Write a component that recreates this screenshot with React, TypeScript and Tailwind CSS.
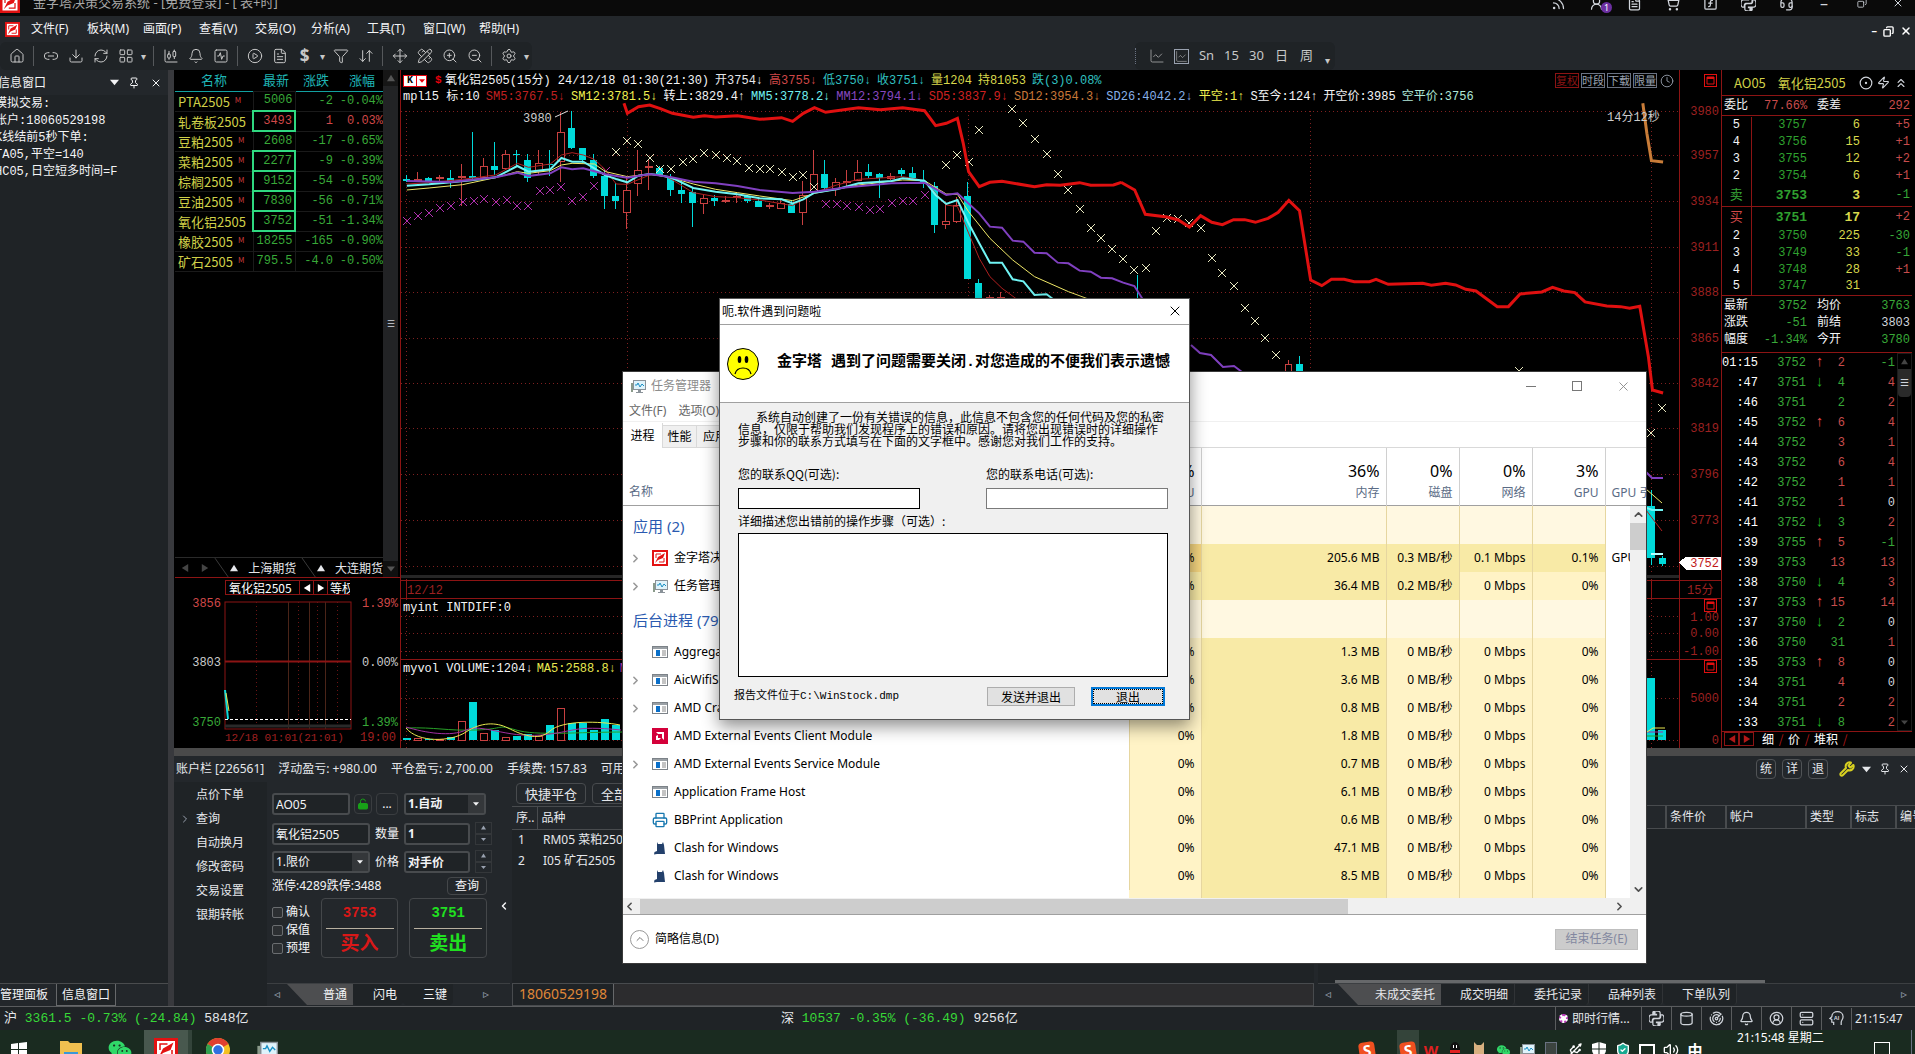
import React from 'react';
import {
  Bell, CandlestickChart, ChartLine, ChevronDown, ChevronLeft, ChevronRight, ChevronUp, ChevronsUp, CirclePlay, Clock, CircleDot,
  CircleUserRound, Copy, Cylinder, Download, FileText, Headset, Home, LayoutGrid, Link2, LockOpen, Move, PencilRuler, Pin, Printer,
  Radar, RefreshCw, Rss, Server, Settings, ShoppingCart, SquareActivity, SquareFunction, UserRound, Volume2, Wrench, X, Zap,
  ZoomIn, ZoomOut, Filter, ArrowDownUp, Usb, ShieldCheck,
} from 'lucide-react';
import { SiPython } from 'react-icons/si';
import { AiFillWechat } from 'react-icons/ai';

const MONO = "font-['Liberation_Mono','Noto_Sans_CJK_SC',monospace]";
const UI = "font-['Noto_Sans','Noto_Sans_CJK_SC',sans-serif]";

const menus = ['文件(F)', '板块(M)', '画面(P)', '查看(V)', '交易(O)', '分析(A)', '工具(T)', '窗口(W)', '帮助(H)'];

interface Quote {
  name: string;
  mark?: boolean;
  last: string;
  diff: string;
  pct: string;
  up?: boolean;
  boxed?: boolean;
}

const quotes: Quote[] = [
  { name: 'PTA2505', mark: true, last: '5006', diff: '-2', pct: '-0.04%' },
  { name: '轧卷板2505', last: '3493', diff: '1', pct: '0.03%', up: true, boxed: true },
  { name: '豆粕2505', mark: true, last: '2608', diff: '-17', pct: '-0.65%' },
  { name: '菜粕2505', mark: true, last: '2277', diff: '-9', pct: '-0.39%', boxed: true },
  { name: '棕榈2505', mark: true, last: '9152', diff: '-54', pct: '-0.59%', boxed: true },
  { name: '豆油2505', mark: true, last: '7830', diff: '-56', pct: '-0.71%', boxed: true },
  { name: '氧化铝2505', last: '3752', diff: '-51', pct: '-1.34%', boxed: true },
  { name: '橡胶2505', mark: true, last: '18255', diff: '-165', pct: '-0.90%' },
  { name: '矿石2505', mark: true, last: '795.5', diff: '-4.0', pct: '-0.50%' },
];

// [low wick, high wick, body top, body bottom, up?]
const candles: [number, number, number, number, number][] = [
  [345, 366, 358, 362, 0], [336, 366, 358, 361, 1], [350, 366, 354, 363, 0], [345, 362, 353, 356, 1],
  [330, 383, 354, 366, 0], [312, 437, 349, 352, 1], [215, 356, 348, 354, 0], [294, 355, 318, 352, 1],
  [245, 345, 318, 329, 0], [270, 330, 283, 325, 1], [270, 320, 283, 286, 0], [282, 365, 300, 353, 0],
  [270, 345, 310, 335, 1], [270, 348, 312, 315, 0], [155, 365, 217, 303, 1], [153, 268, 205, 263, 0],
  [264, 310, 264, 300, 0], [282, 353, 300, 347, 0], [330, 447, 347, 408, 0], [370, 447, 408, 422, 0],
  [350, 507, 392, 458, 1], [270, 408, 331, 371, 1], [298, 390, 318, 323, 1], [318, 347, 324, 345, 0],
  [343, 408, 350, 390, 0], [360, 428, 390, 401, 0], [380, 500, 397, 430, 0], [403, 463, 415, 430, 1],
  [404, 438, 414, 423, 0], [408, 428, 422, 425, 1], [400, 428, 410, 413, 1], [405, 430, 408, 422, 0],
  [415, 442, 422, 440, 0], [428, 446, 435, 438, 1], [420, 448, 430, 445, 1], [420, 458, 432, 458, 0],
  [362, 494, 405, 457, 1], [270, 402, 342, 398, 1], [301, 390, 342, 384, 0], [355, 408, 368, 384, 1],
  [330, 380, 363, 366, 1], [301, 362, 336, 360, 1], [312, 353, 336, 347, 0], [340, 413, 343, 355, 0],
  [340, 360, 348, 356, 1], [323, 350, 330, 343, 0], [322, 360, 340, 354, 0], [330, 384, 362, 366, 0],
  [366, 518, 378, 494, 0], [432, 507, 483, 494, 1], [410, 490, 436, 483, 1], [366, 657, 408, 657, 0],
  [657, 720, 670, 720, 0], [706, 730, 712, 730, 1], [697, 730, 712, 730, 1],
];

const whiteMarks: [number, number][] = [
  [215, 82], [226, 71], [237, 74], [249, 88], [259, 99], [270, 99], [282, 92], [292, 89], [303, 83], [315, 85],
  [326, 88], [336, 91], [348, 98], [359, 99], [369, 99], [381, 102], [392, 107], [402, 105], [413, 117],
  [545, 95], [556, 85], [568, 92], [578, 60], [611, 39], [622, 53], [634, 69], [646, 84], [657, 104], [667, 120],
  [679, 139], [690, 158], [700, 168], [711, 179], [722, 189], [733, 200], [745, 198], [755, 161], [766, 148],
  [777, 149], [788, 153], [800, 158], [811, 188], [821, 203], [833, 216], [844, 238], [854, 251], [864, 268],
  [875, 285], [1118, 301], [1261, 338], [1250, 363],
];

const pinkMarks: [number, number][] = [
  [6, 151], [17, 146], [28, 143], [39, 138], [50, 136], [62, 132], [73, 131], [83, 129], [95, 132], [106, 130],
  [116, 136], [127, 136], [139, 121], [149, 120], [160, 117], [171, 131], [182, 127], [193, 116], [205, 101],
  [425, 134], [436, 134], [446, 136], [458, 137], [469, 140], [479, 139], [491, 133], [502, 131], [512, 131], [524, 125],
];

const volumes: [number, number][] = [
  [2, 0], [2, 1], [1, 0], [1, 1], [3, 0], [19, 1], [38, 0], [7, 1], [10, 0], [3, 1], [4, 0], [6, 0], [4, 1],
  [15, 0], [32, 1], [17, 0], [17, 0], [10, 0], [21, 0], [15, 0], [24, 1],
];

const asks = [
  ['5', '3757', '6', '+5'], ['4', '3756', '15', '+1'], ['3', '3755', '12', '+2'], ['2', '3754', '6', '+1'],
];
const bids = [
  ['2', '3750', '225', '-30'], ['3', '3749', '33', '-1'], ['4', '3748', '28', '+1'], ['5', '3747', '31', ''],
];

// time, price, direction, volume, side, open interest change
const ticks: [string, string, string, string, string, string][] = [
  ['01:15', '3752', '↑', '2', 'r', '-1'], [':47', '3751', '↓', '4', 'g', '4'], [':46', '3751', '', '2', 'g', '2'],
  [':45', '3752', '↑', '6', 'r', '4'], [':44', '3752', '', '3', 'r', '1'], [':43', '3752', '', '6', 'r', '4'],
  [':42', '3752', '', '1', 'r', '1'], [':41', '3752', '', '1', 'r', '0'], [':41', '3752', '↓', '3', 'g', '2'],
  [':39', '3755', '↑', '5', 'r', '-1'], [':39', '3753', '', '13', 'r', '13'], [':38', '3750', '↓', '4', 'g', '3'],
  [':37', '3753', '↑', '15', 'r', '14'], [':37', '3750', '↓', '2', 'g', '0'], [':36', '3750', '', '31', 'g', '1'],
  [':35', '3753', '↑', '8', 'r', '0'], [':34', '3751', '', '4', 'r', '0'], [':34', '3751', '', '2', 'r', '2'],
  [':33', '3751', '↓', '8', 'g', '2'],
];

const processes = [
  { name: 'Aggregator Host', icon: 'app', mem: '1.3 MB' },
  { name: 'AicWifiService', icon: 'app', mem: '3.6 MB', open: true },
  { name: 'AMD Crash Defender Service', icon: 'app', mem: '0.8 MB', open: true },
  { name: 'AMD External Events Client Module', icon: 'amd', mem: '1.8 MB' },
  { name: 'AMD External Events Service Module', icon: 'app', mem: '0.7 MB', open: true },
  { name: 'Application Frame Host', icon: 'app', mem: '6.1 MB' },
  { name: 'BBPrint Application', icon: 'print', mem: '0.6 MB' },
  { name: 'Clash for Windows', icon: 'cat', mem: '47.1 MB' },
  { name: 'Clash for Windows', icon: 'cat', mem: '8.5 MB' },
];

const AppLogo = ({ className }: { className: string }) => (
  <svg viewBox="0 0 16 16" className={className}>
    <rect width="16" height="16" fill="#e31212" />
    <rect x="2" y="2" width="12" height="12" fill="#fff" />
    <path d="M4 8V4h5M7 12h5V8" fill="none" stroke="#e31212" />
    <path d="M3 13l3-6 7-4-2 5-5 2z" fill="#e31212" />
  </svg>
);

const MonitorIcon = ({ className }: { className: string }) => (
  <svg viewBox="0 0 16 16" className={className}>
    <path d="M1 5v9h2V5z" fill="#8b9b8b" />
    <rect x="3.500" y="2.500" width="12" height="9" fill="#dff3fb" stroke="#8a9299" />
    <path d="M5 7h2l1-2 2 4 2-3 2 2" fill="none" stroke="#1a8fc4" />
    <path d="M8 12h3v2h2v1H6v-1h2z" fill="#8a9299" />
  </svg>
);

const PythonIcon = ({ className }: { className?: string }) => (
  <SiPython className={`[&_path]:fill-none [&_path]:stroke-current [&_path]:stroke-2 ${className}`} />
);

const AiHead = ({ className }: { className?: string }) => (
  <svg viewBox="0 0 16 16" className={className} fill="none" stroke="currentColor">
    <path d="M5 15v-3H3V9L1 8l2-2c0-7 12-7 12 0 0 3-2 4-2 6v3" strokeWidth="1.300" />
    <text x="5" y="10" fontSize="6" fontWeight="bold" fill="currentColor" stroke="none" className="font-['Liberation_Sans',sans-serif]">AI</text>
  </svg>
);

const Tri = ({ dir, className }: { dir: 'up' | 'down' | 'left' | 'right'; className: string }) => {
  const shapes = { up: 'M0 9L5 1l5 8z', down: 'M0 2h10L5 8z', left: 'M9 0v10L1 5z', right: 'M1 0v10l8-5z' };
  return <svg viewBox="0 0 10 10" className={`shrink-0 ${className}`} fill="currentColor"><path d={shapes[dir]} /></svg>;
};

const ProcIcon = ({ kind }: { kind: string }) => {
  if (kind === 'amd') {
    return (
      <svg viewBox="0 0 16 16" className="size-4 shrink-0">
        <rect width="16" height="16" fill="#d4003a" />
        <path d="M4 4h8v8l-2-2V6H6zM4 8l2-1v3h3l-2 2H4z" fill="#fff" />
      </svg>
    );
  }
  if (kind === 'print') return <Printer className="size-4 shrink-0 text-[#1878b0]" />;
  if (kind === 'cat') {
    return (
      <svg viewBox="0 0 16 16" className="size-4 shrink-0">
        <path d="M5 2l1 2h4l1-2 1 3 1 9H5l-3 .5.5-2.500L5 11z" fill="#23406b" />
      </svg>
    );
  }
  return (
    <svg viewBox="0 0 16 16" className="size-4 shrink-0">
      <rect x=".5" y="2.500" width="15" height="11" fill="#fff" stroke="#7c8288" />
      <path d="M1 3h14v2H1z" fill="#9aa0a5" />
      <path d="M4 6h4v6H4z" fill="#0a6fc9" />
      <path d="M10 7h4M10 9h4M10 11h4" stroke="#888" />
    </svg>
  );
};

const WinBadge = ({ className = '' }: { className?: string }) => (
  <svg viewBox="0 0 13 13" className={`size-[13px] ${className}`}>
    <rect x=".5" y=".5" width="12" height="12" fill="none" stroke="#e01010" />
    <path d="M3 3h7v7H3z" fill="none" stroke="#e01010" />
    <path d="M3 4h7" stroke="#e01010" strokeWidth="2" />
  </svg>
);

const TopBars: React.FC = () => (
  <header className={UI}>
    <div className="flex h-4 items-end overflow-hidden bg-[#0a0a0a] text-[#a8a8a8]">
      <div className="flex h-[26px] flex-1 items-center text-[13px]">
        <AppLogo className="mr-[13px] size-5" />
        <span>金字塔决策交易系统 - [免费登录] - [ 表+时]</span>
      </div>
      <div className="flex h-[26px] items-center text-gray-300">
        {[Rss, UserRound, FileText, ShoppingCart, SquareFunction, PythonIcon, Headset].map((Icon, i) => (
          <span key={i} className="relative flex w-[38px] justify-center">
            <Icon className="size-[15px]" />
            {i === 1 && (
              <span className="absolute top-[6px] right-[3px] size-[11px] rounded-full bg-[#6b2fa0] text-center text-[9px] leading-[11px] text-white">1</span>
            )}
          </span>
        ))}
        <span className="w-[38px] text-center">–</span>
        <span className="flex w-[38px] justify-center"><Copy className="size-[10px] rotate-90" /></span>
        <span className="flex w-[34px] justify-center"><X className="size-3" /></span>
      </div>
    </div>
    <div className="flex h-[26px] items-center bg-[#23272b] pr-[3px] pl-[5px] text-[12px] text-gray-100">
      <AppLogo className="mr-[11px] size-[15px]" />
      <nav className="flex flex-1 gap-4">
        {menus.map((m) => (
          <a key={m} href="#" className="w-10 whitespace-nowrap">{m}</a>
        ))}
      </nav>
      <div className="flex items-center gap-[6px] pt-1 text-[11px] font-bold text-white">
        <span>–</span><Copy className="size-[11px] rotate-90" strokeWidth={3} /><X className="size-3" strokeWidth={3} />
      </div>
    </div>
    <div className="flex h-7 justify-between bg-[#23272b] text-[#c8c8c8]">
      <div className="flex items-center rounded-md bg-[#1f2326] pl-1">
        {[Home, null, Link2, Download, RefreshCw, LayoutGrid, '▾', null, CandlestickChart, Bell, SquareActivity, null, CirclePlay, FileText, '$', '▾',
          Filter, ArrowDownUp, null, Move, PencilRuler, ZoomIn, ZoomOut, null, Settings, '▾'].map((Icon, i) => {
          if (Icon === null) return <span key={i} className="mx-1 h-5 w-px bg-[#55585b]" />;
          if (typeof Icon === 'string') {
            return (
              <button key={i} className={Icon === '$' ? 'w-[25px] text-[17px] font-bold' : 'w-[11px] text-[10px]'}>{Icon}</button>
            );
          }
          return (
            <button key={i} className="flex w-[25px] justify-center"><Icon className="size-4" strokeWidth={1.5} /></button>
          );
        })}
      </div>
      <div className="mr-[580px] flex items-center rounded-md bg-[#1f2326] text-[13px]">
        <span className="h-4 border-l border-dotted border-gray-500 pr-2" />
        <button className="flex w-[25px] justify-center"><ChartLine className="size-4" strokeWidth={1} /></button>
        <button className="flex w-[25px] justify-center"><span className="border border-gray-400"><ChartLine className="size-[13px]" strokeWidth={1} /></span></button>
        {['Sn', '15', '30', '日', '周'].map((t) => <button key={t} className="w-[25px]">{t}</button>)}
        <button className="w-4 pt-2 text-[10px]">▾</button>
      </div>
    </div>
  </header>
);

const InfoPanel: React.FC = () => (
  <aside className="flex w-[168px] shrink-0 flex-col bg-[#1f2326] text-gray-100">
    <div className={`flex h-[25px] items-center bg-[#23272b] text-[12px] ${UI}`}>
      <span className="-ml-[2px] flex-1">信息窗口</span>
      <Tri dir="down" className="mr-[9px] size-[9px]" />
      <Pin className="mr-[10px] size-3" />
      <X className="mr-[6px] size-3" />
    </div>
    <div className={`-ml-[5px] flex-1 pt-px text-[12px] leading-[17px] whitespace-nowrap ${MONO}`}>
      <p>模拟交易:</p>
      <p>账户:18060529198</p>
      <p>K线结前5秒下单:</p>
      <p>TA05,平空=140</p>
      <p>HC05,日空短多时间=F</p>
    </div>
    <div className={`flex h-[23px] border-t border-[#4a4c4e] bg-[#23272b] text-[12px] ${UI}`}>
      <button className="w-14 text-left">管理面板</button>
      <button className="w-[60px] border border-t-0 border-[#66686a] bg-[#1f2326]">信息窗口</button>
    </div>
  </aside>
);

const QuotePanel: React.FC = () => (
  <section className="flex w-[226px] shrink-0 flex-col bg-black pl-px">
    <div className="flex h-[508px] border-b border-[#8c1414]">
      <div className="flex w-[208px] flex-col">
        <table className="w-full table-fixed border-collapse text-[12px]">
          <thead>
            <tr className="h-[21px] border-b border-[#12a0a0] text-[13px] leading-5 text-[#1fb5b5]">
              <th className="w-[78px] p-0 font-normal">名称</th>
              <th className="w-[42px] p-0 pr-[6px] text-right font-normal whitespace-nowrap">最新</th>
              <th className="w-[42px] p-0 font-normal">涨跌</th>
              <th className="p-0 pr-2 text-right font-normal">涨幅</th>
            </tr>
          </thead>
          <tbody>
            {quotes.map((q) => (
              <tr key={q.name} className={`h-5 border-b border-[#1a1a1a] text-right leading-[17px] ${MONO} ${q.up ? 'text-[#d04848]' : 'text-[#38a838]'}`}>
                <td className="p-0 pl-[3px] text-left font-['Noto_Sans_CJK_SC',sans-serif] text-[13px] whitespace-nowrap text-[#cfcf48]">
                  {q.name}
                  {q.mark && <sup className="ml-[5px] text-[8px] text-[#c83838]">M</sup>}
                </td>
                <td className={q.boxed ? 'border-2 border-[#2fd880] p-0 pr-[2px]' : 'border border-[#1a1a1a] p-0 pr-[2px]'}>{q.last}</td>
                <td className="p-0 pr-1">{q.diff}</td>
                <td className="p-0">{q.pct}</td>
              </tr>
            ))}
          </tbody>
        </table>
        <div className="mt-auto flex h-5 items-center overflow-hidden border-t border-[#2a2a2a] text-[12px] whitespace-nowrap text-gray-200">
          <button className="flex w-5 justify-center text-[#444]"><Tri dir="left" className="size-2" /></button>
          <button className="flex w-5 justify-center text-[#444]"><Tri dir="right" className="size-2" /></button>
          <svg className="h-5 w-4" viewBox="0 0 16 20"><path d="M1 0l14 20" stroke="#3a3a3a" /></svg>
          <button className="flex w-[72px] items-center gap-[10px]"><Tri dir="up" className="size-2" />上海期货</button>
          <svg className="h-5 w-4 shrink-0" viewBox="0 0 16 20"><path d="M1 0l14 20" stroke="#3a3a3a" /></svg>
          <button className="flex items-center gap-[10px]"><Tri dir="up" className="size-2" />大连期货</button>
        </div>
      </div>
      <div className="flex w-[15px] flex-col items-center justify-between bg-[#222325] text-[9px] text-[#555]">
        <span className="flex h-4 w-full items-center justify-center bg-[#161616]"><Tri dir="up" className="size-2" /></span>
        <span className="text-gray-300">☰</span>
        <span className="flex h-4 w-full items-center justify-center bg-[#101010]"><Tri dir="down" className="size-2" /></span>
      </div>
    </div>
    <div className="relative flex-1">
      <div className="mt-[2px] ml-[50px] flex h-[15px] w-[125px] overflow-hidden border border-r-0 border-[#8c1414] text-[12px] leading-[13px] whitespace-nowrap text-white">
        <span className="w-[73px] shrink-0 px-[3px]">氧化铝2505</span>
        <button className="flex w-[14px] shrink-0 items-center justify-center border-l border-[#8c1414]"><Tri dir="left" className="size-2" /></button>
        <button className="flex w-[14px] shrink-0 items-center justify-center border-l border-[#8c1414]"><Tri dir="right" className="size-2" /></button>
        <span className="border-l border-[#8c1414] pl-[2px]">等权</span>
      </div>
      <svg className="absolute inset-0 size-full text-[12px]" fill="none">
        <g className={MONO} stroke="none">
          <text x="46" y="29" textAnchor="end" fill="#d04848">3856</text>
          <text x="46" y="88" textAnchor="end" fill="#ccc">3803</text>
          <text x="46" y="148" textAnchor="end" fill="#38a838">3750</text>
          <text x="223" y="29" textAnchor="end" fill="#d04848">1.39%</text>
          <text x="223" y="88" textAnchor="end" fill="#ccc">0.00%</text>
          <text x="223" y="148" textAnchor="end" fill="#38a838">1.39%</text>
          <text x="50" y="163" fill="#a02020" className="text-[11px]">12/18 01:01(21:01)</text>
          <text x="221" y="163" textAnchor="end" fill="#a02020">19:00</text>
        </g>
        <rect x="50" y="24" width="126" height="127" stroke="#8c1414" />
        <path d="M113.500 24v127M134.500 24v127M150.500 24v127" stroke="#4a2418" />
        <path d="M81.500 24v127M123.500 24v127M142.500 24v127M162.500 24v127" stroke="#6b1414" strokeDasharray="1 3" />
        <path d="M50 83.500h126" stroke="#8c1414" strokeWidth="2" />
        <path d="M50 148h126" stroke="#2a2a2a" strokeWidth="3" />
        <path d="M50 141.500h126" stroke="#fff" strokeDasharray="3 2" />
        <path d="M50 112l3 29" stroke="#10dada" strokeWidth="2" />
        <path d="M51 115l3 18" stroke="#e8e850" />
      </svg>
    </div>
  </section>
);

const Marks = ({ at, color }: { at: [number, number][]; color: string }) => (
  <path d={at.map(([x, y]) => `M${x - 4} ${y - 4}l8 8m0-8l-8 8`).join('')} stroke={color} />
);

const headLine = [
  ['氧化铝2505(15分) 24/12/18 01:30(21:30)', 'text-gray-100'],
  ['开3754↓', 'text-gray-200'],
  ['高3755↓', 'text-[#d04848]'],
  ['低3750↓', 'text-[#30c0c0]'],
  ['收3751↓', 'text-[#30c0c0]'],
  ['量1204', 'text-[#d8d84c]'],
  ['持81053', 'text-[#d8d84c]'],
  ['跌(3)0.08%', 'text-[#30c0c0]'],
];
const indicatorLine = [
  ['mpl15 标:10', 'text-gray-100'],
  ['SM5:3767.5↓', 'text-[#c02020]'],
  ['SM12:3781.5↓', 'text-[#f0f050]'],
  ['转上:3829.4↑', 'text-gray-100'],
  ['MM5:3778.2↓', 'text-[#70f0f0]'],
  ['MM12:3794.1↓', 'text-[#8848c0]'],
  ['SD5:3837.9↓', 'text-[#d02020]'],
  ['SD12:3954.3↓', 'text-[#c87838]'],
  ['SD26:4042.2↓', 'text-[#88b0e8]'],
  ['平空:1↑', 'text-[#f0f050]'],
  ['S至今:124↑', 'text-gray-100'],
  ['开空价:3985', 'text-gray-100'],
  ['空平价:3756', 'text-[#b0e8d8]'],
];
const priceAxis: [string, number][] = [
  ['3980', 41], ['3957', 85], ['3934', 131], ['3911', 177], ['3888', 222], ['3865', 268],
  ['3842', 313], ['3819', 358], ['3796', 404], ['3773', 450],
];

const ChartPanel: React.FC = () => (
  <section className={`relative min-w-0 flex-1 overflow-hidden border-x border-[#8c1414] bg-black text-[12px] ${MONO}`}>
    <svg className="absolute inset-0 size-full" fill="none" shapeRendering="crispEdges">
      <path
        d="M0 41.500h1279M0 85.500h1279M0 131.500h1279M0 177.500h1279M0 222.500h1279M0 268.500h1279M0 313.500h1279M0 358.500h1279M0 404.500h1279M0 450.500h1279M0 496.500h1279M0 546.500h1279M0 563.500h1279M0 581.500h1279M0 628.500h1279M0 670.500h1279M5.500 41v637M226.500 41v637M567.500 41v637M909.500 41v637M1250.500 41v637"
        stroke="#802020"
        strokeDasharray="1 3"
      />
      <path d="M0 510.500h1321M0 528.500h1321M0 589.500h1321M1278.500 0v678M5.500 511v17M1250.500 511v17" stroke="#8c1414" />
      <path d="M0 506.500h1278" stroke="#262626" strokeWidth="3" />
      {candles.map(([hi, lo, top, bottom, up], i) => {
        const x = 6 + i * 11;
        const color = up ? '#c84040' : '#00dada';
        return (
          <g key={i}>
            <path d={`M${x - 0.5} ${hi / 3 - 10}V${lo / 3 - 10}`} stroke={color} />
            <rect x={x - 4} y={top / 3 - 10} width="7" height={Math.max(1, (bottom - top) / 3)} stroke={up ? color : 'none'} fill={up ? '#000' : color} />
          </g>
        );
      })}
      <path d="M736.500 205v40M898.500 286v20M1250.500 420v75M1261.500 486v10" stroke="#00dada" />
      <path d="M884 294h6v12h-6zM887.500 290v4" stroke="#c84040" />
      <path d="M895 294h7v12h-7zM1246 436h8v52h-8zM1258 488h7v6h-7z" fill="#00dada" />
      {volumes.map(([h, up], i) => (
        <rect key={i} x={2 + i * 11} y={670 - h} width={up ? 7 : 8} height={h} fill={up ? '#000' : '#00dada'} stroke={up ? '#c84040' : 'none'} />
      ))}
      <path d="M1246 608h8v62h-8zM1257 660h8v10h-8z" fill="#00dada" />
      <g shapeRendering="auto">
        <Marks at={whiteMarks} color="#e8e8c0" />
        <Marks at={pinkMarks} color="#b030b0" />
        <g transform="translate(0 -10) scale(.4847 .3333)" className="[&>polyline]:[vector-effect:non-scaling-stroke]">
          <polyline stroke="#b02020" points="12,372 58,368 127,358 195,345 240,310 263,322 308,312 331,285 353,278 376,285 399,298 422,330 444,372 467,373 513,345 535,343 558,358 603,398 649,410 694,413 740,420 808,437 853,398 899,375 944,358 1035,350 1080,362 1103,400 1125,435 1148,440 1193,595 1215,650 1240,685 1270,717" />
          <polyline stroke="#f0e868" points="12,390 58,384 127,374 195,353 240,335 263,340 308,332 331,315 353,310 399,312 422,335 467,350 513,342 558,353 603,372 649,388 694,398 740,408 808,422 853,400 944,375 1035,360 1080,362 1125,402 1148,403 1171,455 1215,535 1262,600 1307,650 1377,695 1418,717" />
          <polyline stroke="#70f4f4" strokeWidth="2" points="12,377 58,373 104,367 150,360 195,352 240,318 263,335 308,328 331,294 353,305 376,305 399,325 422,346 444,357 467,367 490,347 513,342 535,346 558,353 603,384 649,395 694,403 740,415 785,418 808,430 830,418 853,398 899,388 944,370 1012,363 1035,355 1080,362 1103,405 1125,432 1148,420 1171,490 1193,550 1215,608 1240,608 1262,658 1284,664 1307,705 1332,703 1345,717" />
          <polyline stroke="#8040c0" strokeWidth="2" points="12,363 104,366 195,352 240,338 263,348 308,340 331,322 353,328 376,325 422,343 467,353 513,342 558,352 603,365 649,370 694,378 740,390 808,399 853,395 921,382 1012,370 1080,368 1125,405 1148,400 1193,460 1215,500 1240,503 1262,542 1284,545 1307,578 1332,580 1355,608 1377,610 1400,632 1423,635 1444,653 1467,655 1490,668 1513,678 1530,717" />
          <polyline stroke="#e01010" strokeWidth="3" points="460,130 467,160 490,140 513,135 535,146 560,160 603,172 626,167 649,171 694,167 740,178 785,173 808,184 830,160 853,143 876,157 944,143 989,149 1035,143 1080,152 1103,197 1125,190 1148,175 1160,250 1171,335 1193,380 1215,367 1240,364 1307,380 1332,374 1360,376 1400,368 1423,376 1470,375 1486,367" />
        </g>
        <g transform="translate(720 -70) scale(.5071 .3333)" className="[&>polyline]:[vector-effect:non-scaling-stroke]">
          <polyline stroke="#e01010" strokeWidth="3" points="0,547 27,570 48,643 91,651 113,660 135,681 157,647 179,667 200,674 222,659 244,659 265,667 290,655 310,637 331,601 352,632 374,840 396,857 415,838 440,838 460,845 490,845 503,838 527,853 595,850 612,856 640,850 660,855 680,868 700,873 742,920 764,920 787,882 830,876 851,862 873,873 895,878 915,906 958,918 985,920 1003,925 1023,919 1040,1070 1048,1170 1069,1179" />
          <polyline stroke="#c87c38" strokeWidth="3" points="1029,310 1037,400 1046,482 1069,486" />
        </g>
        <path d="M790 275l9 8 11 2 12 12 11-1 8 6M1245 402l6 6h11" stroke="#8040c0" strokeWidth="2" />
        <path d="M1246 438l5 2h11" stroke="#70f4f4" strokeWidth="2" />
        <path d="M1250 484h12" stroke="#b8ffff" strokeWidth="2" />
        <path d="M1245 419l16 14" stroke="#f0e868" />
        <path d="M1245 440l16 21" stroke="#b02020" />
        <path d="M5 658c30-1 40 3 70 2s20-6 40 0 60 2 110 2M1246 666h16" stroke="#28a028" />
        <path d="M5 657c20 6 45 10 60 3s40 8 75 5 30-10 80-5M1246 662h16" stroke="#a030a0" />
        <path d="M5 658c12 15 45 14 60 4s30-10 42-4 30 14 42 3 50-10 70-6M1246 662l6-4h12" stroke="#e8e850" />
        <path d="M154 47l13-6" stroke="#ddd" />
      </g>
      <text x="122" y="52" fill="#ccc">3980</text>
      <text x="1206" y="51" fill="#ccc">14分12秒</text>
      {priceAxis.map(([t, y]) => <text key={t} x="1318" y={y + 4} textAnchor="end" fill="#9c2020">{t}</text>)}
      <path d="M1278 492.500l7-6h35v13h-35z" fill="#fff" />
      <text x="1318" y="497" textAnchor="end" fill="#c01818">3752</text>
      <text x="6" y="524" fill="#9c2020">12/12</text>
      <text x="1286" y="524" fill="#9c2020">15分</text>
      <text x="1318" y="551" textAnchor="end" fill="#9c2020">1.00</text>
      <text x="1318" y="567" textAnchor="end" fill="#9c2020">0.00</text>
      <text x="1318" y="585" textAnchor="end" fill="#9c2020">-1.00</text>
      <text x="1318" y="632" textAnchor="end" fill="#9c2020">5000</text>
      <text x="1318" y="674" textAnchor="end" fill="#9c2020">0</text>
    </svg>
    <div className="relative flex h-full flex-col whitespace-nowrap">
      <div className="flex h-[18px] items-center gap-2 pt-[3px] pl-[2px]">
        <span className="flex h-3 w-6 border border-red-600 bg-white text-center text-[10px] leading-[10px] text-black">
          <b className="flex-1">K</b><span className="flex w-[10px] items-center justify-center border-l border-red-600 text-red-600"><Tri dir="down" className="size-[6px]" /></span>
        </span>
        <b className="w-1 text-[11px] text-red-600">$</b>
        {headLine.map(([t, c]) => <span key={t} className={`ml-[-2px] ${c}`}>{t}</span>)}
        <span className="ml-auto flex items-center gap-[2px] pr-[4px] font-['Noto_Sans_CJK_SC',sans-serif] text-[11px] leading-[13px] text-gray-400">
          <button className="w-6 border border-[#8c1414] text-[#8c1414]">复权</button>
          <button className="w-6 border border-gray-500">时段</button>
          <button className="w-6 border border-gray-500">下载</button>
          <button className="w-6 border border-gray-500">限量</button>
          <Clock className="ml-px size-[14px]" strokeWidth={1.5} />
          <WinBadge className="ml-7" />
        </span>
      </div>
      <div className="flex h-[17px] items-center gap-[6px] pl-[2px]">
        {indicatorLine.map(([t, c]) => <span key={t} className={c}>{t}</span>)}
      </div>
      <div className="mt-[490px] flex h-[61px] items-start justify-between pt-1 text-gray-100">
        <span className="pl-[2px]">myint INTDIFF:0</span>
        <WinBadge className="mr-1" />
      </div>
      <div className="flex items-start justify-between pt-1 text-gray-100">
        <span className="flex gap-1 pl-[2px]">myvol VOLUME:1204↓<span className="text-[#e8e850]">MA5:2588.8↓</span><span className="text-[#a030a0]">MA10:3056.3</span></span>
        <WinBadge className="mr-1" />
      </div>
    </div>
  </section>
);

const tone = (v: string) => (v.startsWith('-') ? 'text-[#38a838]' : v === '0' ? 'text-gray-300' : 'text-[#c84c4c]');

const DepthRow = ({ row, side }: { row: string[]; side?: string }) => (
  <tr className={side ? 'h-[21px] text-[13px] font-bold' : 'h-[17px]'}>
    <td className={`w-[29px] border-r border-[#8c1414] p-0 text-center font-normal ${side || 'text-gray-100'}`}>{row[0]}</td>
    <td className="w-14 p-0 text-[#2fa02f]">{row[1]}</td>
    <td className="w-[53px] p-0 text-[#d8d84c]">{row[2]}</td>
    <td className={`p-0 pr-[2px] text-[12px] font-normal ${tone(row[3])}`}>{row[3]}</td>
  </tr>
);

const DepthPanel: React.FC = () => (
  <section className={`flex w-[193px] shrink-0 flex-col bg-black pr-[3px] text-[12px] ${MONO}`}>
    <div className="flex h-[25px] shrink-0 items-center gap-3 pl-3 font-['Noto_Sans_CJK_SC',sans-serif] text-[13px] text-[#cfcf48]">
      <span>AO05</span>
      <span className="flex-1">氧化铝2505</span>
      <span className="flex gap-1 pr-1 text-gray-300"><CircleDot className="size-[14px]" /><Zap className="size-[13px]" /><ChevronsUp className="size-[14px]" /></span>
    </div>
    <div className="flex h-[21px] shrink-0 items-center border-y border-[#8c1414] px-[2px] text-[#c84c4c]">
      <span className="w-10 text-gray-100">委比</span><span className="w-[53px]">77.66%</span>
      <span className="flex-1 text-gray-100">委差</span><span>292</span>
    </div>
    <table className="mt-px w-full table-fixed text-right leading-[15px]">
      <tbody>
        {asks.map((r) => <DepthRow key={r[0]} row={r} />)}
        <DepthRow row={['卖', '3753', '3', '-1']} side="text-[#38a838]" />
      </tbody>
    </table>
    <table className="w-full table-fixed border-y border-[#8c1414] text-right leading-[15px]">
      <tbody>
        <DepthRow row={['买', '3751', '17', '+2']} side="text-[#d04848]" />
        {bids.map((r) => <DepthRow key={r[0]} row={r} />)}
      </tbody>
    </table>
    <div className="flex h-[57px] shrink-0 flex-col border-b border-[#8c1414] pt-[2px] leading-[17px] text-[#38a838]">
      {[['最新', '3752', '均价', '3763'], ['涨跌', '-51', '前结', '3803'], ['幅度', '-1.34%', '今开', '3780']].map((r) => (
        <div key={r[0]} className="flex px-[2px] text-right">
          <span className="w-7 text-left text-gray-100">{r[0]}</span><span className="w-[55px]">{r[1]}</span>
          <span className="w-[34px] text-gray-100">{r[2]}</span>
          <span className={`flex-1 ${r[3] === '3803' ? 'text-gray-300' : ''}`}>{r[3]}</span>
        </div>
      ))}
    </div>
    <div className="flex min-h-0 flex-1 overflow-hidden">
      <table className="h-fit flex-1 table-fixed text-right">
        <tbody>
          {ticks.map((t, i) => (
            <tr key={i} className="h-5">
              <td className="w-[35px] p-0 text-white">{t[0]}</td>
              <td className="w-12 p-0 text-[#38a838]">{t[1]}</td>
              <td className={`w-[18px] p-0 text-[15px] leading-5 ${t[2] === '↑' ? 'text-[#e04848]' : 'text-[#20b020]'}`}>{t[2]}</td>
              <td className={`w-[21px] p-0 ${t[4] === 'r' ? 'text-[#c84c4c]' : 'text-[#38a838]'}`}>{t[3]}</td>
              <td className={`p-0 ${tone(t[5])}`}>{t[5]}</td>
            </tr>
          ))}
        </tbody>
      </table>
      <div className="ml-[2px] flex w-[15px] flex-col items-center gap-1 border border-[#1c1c1c] py-1 text-[#444]">
        <Tri dir="up" className="size-[7px]" />
        <span className="flex h-7 w-full items-center justify-center rounded-b bg-[#2a2a2a] text-[10px] text-gray-300">☰</span>
        <Tri dir="down" className="mt-auto size-[7px]" />
      </div>
    </div>
    <div className="flex h-[17px] shrink-0 items-start border-t border-[#8c1414] font-['Noto_Sans_CJK_SC',sans-serif] leading-[14px] text-white">
      <button className="ml-[2px] flex h-[14px] w-[15px] items-center justify-center border border-[#8c1414] text-[#b01818]"><Tri dir="left" className="size-2" /></button>
      <button className="mr-2 flex h-[14px] w-[15px] items-center justify-center border border-[#8c1414] text-[#b01818]"><Tri dir="right" className="size-2" /></button>
      <button>细</button><span className="w-[14px] text-center text-[#b01818]">/</span>
      <button>价</button><span className="w-[14px] text-center text-[#b01818]">/</span>
      <button>堆积</button><span className="w-[14px] text-center text-[#b01818]">/</span>
    </div>
  </section>
);

const FIELD = 'h-[22px] rounded-[3px] border-2 border-[#484b4e] bg-[#1f2326] px-[2px] text-[12px] text-gray-100';

const Spinner = () => (
  <div className="flex h-[23px] w-[17px] flex-col text-gray-400">
    <button type="button" aria-label="增加" className="flex flex-1 items-center justify-center border border-[#34373a]"><Tri dir="up" className="size-[5px]" /></button>
    <button type="button" aria-label="减少" className="flex flex-1 items-center justify-center border border-[#34373a]"><Tri dir="down" className="size-[5px]" /></button>
  </div>
);

const Dropdown = ({ label, className, value }: { label: string; className: string; value: string }) => (
  <span className="relative flex">
    <select aria-label={label} className={`appearance-none ${FIELD} ${className}`}><option>{value}</option></select>
    <span className="pointer-events-none absolute inset-y-[2px] right-[2px] flex w-4 items-center justify-center bg-[#34373a]"><Tri dir="down" className="size-[6px]" /></span>
  </span>
);

const OrderForm: React.FC = () => (
  <form className="flex w-[243px] shrink-0 flex-col bg-[#23272b] text-[12px] whitespace-nowrap text-gray-100">
    <div className="flex flex-1 flex-col pl-[5px]">
      <div className="mt-[11px] flex h-[22px] items-center gap-1">
        <input aria-label="代码" defaultValue="AO05" className={`w-[78px] ${FIELD}`} />
        <button type="button" aria-label="锁定" className="flex h-5 w-[18px] items-center justify-center rounded border border-[#3a3d40]"><LockOpen className="size-3 text-[#18a018] [&>rect]:fill-current" /></button>
        <button type="button" className="h-[22px] w-[22px] rounded border border-[#3a3d40]">...</button>
        <span className="ml-[2px] font-bold"><Dropdown label="开平" value="1.自动" className="w-[82px]" /></span>
      </div>
      <div className="mt-[7px] flex h-[23px] items-center gap-[5px]">
        <input aria-label="合约" defaultValue="氧化铝2505" className={`w-[98px] ${FIELD}`} />
        <label htmlFor="qty">数量</label>
        <input id="qty" defaultValue="1" className={`w-[66px] font-bold ${FIELD}`} />
        <Spinner />
      </div>
      <div className="mt-[5px] flex h-[23px] items-center gap-[5px]">
        <Dropdown label="类型" value="1.限价" className="w-[98px]" />
        <label htmlFor="price">价格</label>
        <input id="price" defaultValue="对手价" className={`w-[66px] font-bold ${FIELD}`} />
        <Spinner />
      </div>
      <div className="mt-1 flex h-[18px] w-[215px] items-center justify-between">
        <span>涨停:4289跌停:3488</span>
        <button type="button" className="h-[18px] w-10 rounded border border-[#44474a] leading-4">查询</button>
      </div>
      <div className="mt-[3px] flex h-[60px]">
        <div className="flex w-[49px] flex-col pt-[5px]">
          {['确认', '保值', '预埋'].map((t) => (
            <label key={t} className="flex h-[18px] items-center gap-[3px]">
              <input type="checkbox" className="size-[11px] appearance-none rounded-[2px] border border-[#6a6d70] bg-[#2c2f32]" />
              {t}
            </label>
          ))}
        </div>
        <button type="button" className="flex w-[78px] flex-col items-center rounded border border-[#44474a] text-[#d81818]">
          <b className={`w-[68px] border-b border-[#b8b0a0] text-[14px] leading-[29px] ${MONO}`}>3753</b>
          <b className="text-[19px] leading-7">买入</b>
        </button>
        <button type="button" className="ml-[11px] flex w-[78px] flex-col items-center rounded border border-[#44474a] text-[#20e020]">
          <b className={`w-[68px] border-b border-[#b8b0a0] text-[14px] leading-[29px] ${MONO}`}>3751</b>
          <b className="text-[19px] leading-7">卖出</b>
        </button>
        <ChevronLeft className="ml-[11px] h-4 w-3" strokeWidth={3} />
      </div>
    </div>
    <div className="flex h-[23px] items-start border-t border-[#3c3f42]">
      <button type="button" className="w-5 leading-5 text-gray-400">◃</button>
      <svg className="h-[21px] w-5" viewBox="0 0 20 21"><path d="M0 0h20v21z" fill="#4d4e50" /></svg>
      <button type="button" className="h-[21px] w-[46px] bg-[#4d4e50] pr-[6px] text-right">普通</button>
      <button type="button" className="h-[21px] w-[50px] rounded-b bg-[#1f2326] pr-[6px] text-right">闪电</button>
      <button type="button" className="h-[21px] w-[50px] rounded-b bg-[#1f2326] pr-[6px] text-right">三键</button>
      <button type="button" className="ml-[30px] leading-5 text-gray-400">▹</button>
    </div>
  </form>
);

const TradePanel: React.FC = () => (
  <section className={`flex h-[250px] shrink-0 flex-col bg-[#23272b] text-[12px] text-gray-200 ${UI}`}>
    <div className="flex h-[26px] shrink-0 items-center gap-[14px] pl-[2px] whitespace-nowrap">
      <span>账户栏 [226561]</span>
      <span>浮动盈亏: +980.00</span>
      <span>平仓盈亏: 2,700.00</span>
      <span>手续费: 157.83</span>
      <span>可用: 98,364.20</span>
      <div className="ml-auto flex items-center gap-[6px] pr-[5px]">
        {['统', '详', '退'].map((t) => <button key={t} className="h-5 w-5 rounded border border-[#505356] leading-4">{t}</button>)}
        <Wrench className="ml-[5px] size-4 text-[#d8d020]" strokeWidth={3} />
        <Tri dir="down" className="mx-px size-[9px]" />
        <Pin className="mx-px size-3" />
        <X className="size-3" />
      </div>
    </div>
    <div className="flex min-h-0 flex-1">
      <nav className="relative flex w-[93px] shrink-0 flex-col bg-[#1f2326] pt-px">
        <ChevronRight className="absolute top-[31px] left-[5px] size-3 text-gray-400" />
        {['点价下单', '查询', '自动换月', '修改密码', '交易设置', '银期转帐'].map((t) => (
          <a key={t} href="#" className="h-6 pl-[22px] leading-6">{t}</a>
        ))}
      </nav>
      <OrderForm />
      <div className="ml-[2px] flex w-[802px] shrink-0 flex-col bg-[#1f2326]">
        <div className="flex h-6 shrink-0 gap-[6px] bg-[#23272b] px-1 pt-px text-[13px]">
          <button className="h-[21px] w-[70px] rounded border border-[#484b4e] leading-[18px]">快捷平仓</button>
          <button className="h-[21px] w-[70px] rounded border border-[#484b4e] leading-[18px]">全部平仓</button>
        </div>
        <table className="w-full table-fixed text-left">
          <thead className="h-[23px] border-y border-[#484b4e] bg-[#23272b]">
            <tr><th className="w-[25px] border-r border-[#484b4e] pl-1 font-normal">序..</th><th className="pl-1 font-normal">品种</th></tr>
          </thead>
          <tbody>
            <tr className="h-[21px]"><td className="pl-[6px]">1</td><td className="pl-[6px]">RM05 菜粕2505</td></tr>
            <tr className="h-[21px]"><td className="pl-[6px]">2</td><td className="pl-[6px]">I05 矿石2505</td></tr>
          </tbody>
        </table>
        <div className="mt-auto flex h-[23px] items-center border border-[#484b4e] bg-[#2c2c2e]">
          <span className="h-full border-r border-[#66686a] bg-[#1f2326] px-[6px] text-[14px] leading-[19px] text-[#e08838]">18060529198</span>
        </div>
      </div>
      <div className="ml-1 flex min-w-0 flex-1 flex-col justify-between bg-[#1f2326]">
        <div className="h-[47px] bg-[#23272b] pt-[23px]">
          <div className="flex h-6 items-center justify-end border-y border-[#484b4e] leading-[22px] whitespace-nowrap">
            <span className="w-[60px] border-l-2 border-[#484b4e] pl-[3px]">条件价</span>
            <span className="w-20 border-l-2 border-[#484b4e] pl-[3px]">帐户</span>
            <span className="w-[45px] border-l-2 border-[#484b4e] pl-[3px]">类型</span>
            <span className="w-[45px] border-l-2 border-[#484b4e] pl-[3px]">标志</span>
            <span className="w-5 overflow-hidden border-l-2 border-[#484b4e] pl-[3px]">编号</span>
          </div>
        </div>
        <div>
          <div className="ml-[17px] h-[3px] w-[430px] bg-[#66686a]" />
          <div className="flex h-[23px] items-start border-t border-[#3c3f42] bg-[#23272b] whitespace-nowrap">
            <button className="w-5 leading-5 text-gray-400">◃</button>
            <svg className="h-[21px] w-5" viewBox="0 0 20 21"><path d="M0 0h20v21z" fill="#4d4e50" /></svg>
            <button className="h-[21px] w-[83px] bg-[#4d4e50] pr-[6px] text-right">未成交委托</button>
            {['成交明细', '委托记录', '品种列表', '下单队列'].map((t) => (
              <button key={t} className="h-[21px] w-[74px] rounded-b border-r border-[#303336] bg-[#1f2326] pr-[6px] text-right">{t}</button>
            ))}
            <button className="mr-2 ml-auto leading-5 text-gray-400">▹</button>
          </div>
        </div>
      </div>
    </div>
  </section>
);

const Th = ({ top, label, className }: { top?: string; label: string; className: string }) => (
  <th className={`border-r border-[#d0d0d0] p-0 pr-[6px] pb-[2px] text-right font-normal whitespace-nowrap ${className}`}>
    <div className="text-[16px] leading-6 text-black">{top}</div>
    <div className="text-[12px] leading-5 text-[#5a6b85]">{label}</div>
  </th>
);

const CELL = 'border-r border-[#e6d6a0] p-0 pr-[6px]';

const GroupRow = ({ title, className }: { title: string; className: string }) => (
  <tr className={className}>
    <td className="p-0 pt-[3px] pl-[10px] text-left text-[15px] text-[#2a5ab0]">{title}</td>
    {[0, 1, 2, 3, 4].map((i) => <td key={i} className={`bg-[#fff8e1] ${CELL}`} />)}
    <td />
  </tr>
);

const Caret = ({ show }: { show?: boolean }) => (
  <i className="flex w-[17px] shrink-0 text-[#999]">{show && <ChevronRight className="size-[13px]" strokeWidth={3} />}</i>
);

const TaskManager: React.FC = () => (
  <section className={`absolute top-[371px] left-[622px] flex h-[593px] w-[1025px] flex-col overflow-hidden border border-[#3a3a3a] bg-white text-[12px] text-black ${UI}`}>
    <div className="flex h-7 shrink-0 items-center pl-[7px] text-[#8c8c8c]">
      <MonitorIcon className="mr-[5px] size-4" />
      <span className="flex-1">任务管理器</span>
      <button aria-label="最小化" className="flex w-[46px] justify-center"><span className="h-px w-[10px] bg-[#777]" /></button>
      <button aria-label="最大化" className="flex w-[46px] justify-center"><span className="size-[10px] border border-[#777]" /></button>
      <button aria-label="关闭" className="flex w-[46px] justify-center"><X className="size-[15px]" strokeWidth={1.5} /></button>
    </div>
    <div className="flex h-[22px] shrink-0 items-center gap-3 border-b border-[#f0f0f0] pl-[6px] text-[#666]">
      <span>文件(F)</span><span>选项(O)</span><span>查看(V)</span>
    </div>
    <div className="flex h-[26px] shrink-0 items-end border-b border-[#d9d9d9]">
      <button className="-mb-px h-[25px] w-10 border-r border-[#d9d9d9] bg-white">进程</button>
      <button className="h-[22px] w-[34px] border-t border-r border-[#d9d9d9] bg-[#f0f0f0]">性能</button>
      <button className="h-[22px] w-[80px] border-t border-r border-[#d9d9d9] bg-[#f0f0f0] pl-[6px] text-left">应用历史记录</button>
    </div>
    <div className="relative min-h-0 flex-1 overflow-hidden">
      <table className="w-full table-fixed border-collapse text-right">
        <thead>
          <tr className="h-[57px] border-b border-[#a0a0a0] align-bottom">
            <th className="w-[506px] border-r border-[#d0d0d0] pb-1 pl-[6px] text-left font-normal text-[#5a6b85]">名称</th>
            <Th top="10%" label="CPU" className="w-[72px]" />
            <Th top="36%" label="内存" className="w-[185px]" />
            <Th top="0%" label="磁盘" className="w-[73px]" />
            <Th top="0%" label="网络" className="w-[73px]" />
            <Th top="3%" label="GPU" className="w-[73px]" />
            <th className="overflow-hidden p-0 pb-[2px] pl-[6px] text-left leading-5 font-normal whitespace-nowrap text-[#5a6b85]">GPU 引擎</th>
          </tr>
        </thead>
        <tbody>
          <GroupRow title="应用 (2)" className="h-[39px]" />
          <tr className="h-7">
            <td className="p-0"><span className="flex items-center gap-[6px] pl-[6px]"><Caret show /><AppLogo className="size-4" />金字塔决策交易系统</span></td>
            <td className={`bg-[#f6d680] ${CELL}`}>4.1%</td>
            <td className={`bg-[#f8eaa6] ${CELL}`}>205.6 MB</td>
            <td className={`bg-[#f8eaa6] ${CELL}`}>0.3 MB/秒</td>
            <td className={`bg-[#f8eaa6] ${CELL}`}>0.1 Mbps</td>
            <td className={`bg-[#f8eaa6] ${CELL}`}>0.1%</td>
            <td className="overflow-hidden p-0 pl-[6px] text-left whitespace-nowrap">GPU 0</td>
          </tr>
          <tr className="h-7">
            <td className="p-0"><span className="flex items-center gap-[6px] pl-[6px]"><Caret show /><MonitorIcon className="size-4" />任务管理器</span></td>
            <td className={`bg-[#f8eaa6] ${CELL}`}>1.2%</td>
            <td className={`bg-[#f8eaa6] ${CELL}`}>36.4 MB</td>
            <td className={`bg-[#f8eaa6] ${CELL}`}>0.2 MB/秒</td>
            <td className={`bg-[#fff3c6] ${CELL}`}>0 Mbps</td>
            <td className={`bg-[#fff3c6] ${CELL}`}>0%</td>
            <td />
          </tr>
          <GroupRow title="后台进程 (79)" className="h-[38px]" />
          {processes.map((p, i) => (
            <tr key={i} className="h-7">
              <td className="p-0">
                <span className="flex items-center gap-[6px] pl-[6px]">
                  <Caret show={p.open} />
                  <ProcIcon kind={p.icon} />
                  {p.name}
                </span>
              </td>
              <td className={`border-l bg-[#fff3c6] ${CELL}`}>0%</td>
              <td className={`bg-[#f8eaa6] ${CELL}`}>{p.mem}</td>
              <td className={`bg-[#fff3c6] ${CELL}`}>0 MB/秒</td>
              <td className={`bg-[#fff3c6] ${CELL}`}>0 Mbps</td>
              <td className={`bg-[#fff3c6] ${CELL}`}>0%</td>
              <td />
            </tr>
          ))}
          <tr className="h-3">
            <td />
            <td className={`bg-[#fff3c6] ${CELL}`} /><td className={`bg-[#f8eaa6] ${CELL}`} /><td className={`bg-[#fff3c6] ${CELL}`} />
            <td className={`bg-[#fff3c6] ${CELL}`} /><td className={`bg-[#fff3c6] ${CELL}`} /><td />
          </tr>
        </tbody>
      </table>
      <div className="absolute top-[58px] right-0 bottom-0 flex w-4 flex-col items-center gap-[2px] bg-[#f0f0f0] py-[2px] text-[#505050]">
        <ChevronUp className="size-[13px]" strokeWidth={3} /><span className="h-[27px] w-full bg-[#cdcdcd]" /><ChevronDown className="mt-auto size-[13px]" strokeWidth={3} />
      </div>
    </div>
    <div className="flex h-[17px] shrink-0 items-center border-b border-[#a0a0a0] bg-[#f0f0f0] pr-5 text-[#505050]">
      <ChevronLeft className="mr-1 size-[13px]" strokeWidth={3} /><span className="h-[15px] w-[708px] bg-[#cdcdcd]" /><ChevronRight className="ml-auto size-[13px]" strokeWidth={3} />
    </div>
    <div className="flex h-12 shrink-0 items-center justify-between pr-2 pl-[7px]">
      <button className="flex items-center gap-[6px]"><span className="flex size-[19px] items-center justify-center rounded-full border border-[#999] text-[#777]"><ChevronUp className="size-3" /></span>简略信息(D)</button>
      <button disabled className="h-[21px] w-[83px] border border-[#bfbfbf] bg-[#ccc] leading-[18px] text-[#8388a0]">结束任务(E)</button>
    </div>
  </section>
);

const CrashDialog: React.FC = () => (
  <section role="dialog" className="absolute top-[298px] left-[719px] flex h-[422px] w-[471px] flex-col border border-[#555] bg-[#f0f0f0] font-['Noto_Sans_CJK_SC',sans-serif] text-[12px] text-black shadow-[0_6px_16px_rgba(0,0,0,0.45)]">
    <div className="flex h-[26px] shrink-0 items-center justify-between border-b border-[#a0a0a0] bg-white pr-[6px] pb-px pl-[2px]">
      <span>呃.软件遇到问题啦</span>
      <button aria-label="关闭"><X className="size-4" strokeWidth={1.5} /></button>
    </div>
    <div className="flex h-[78px] shrink-0 items-center border-b border-[#a0a0a0] bg-white pl-[7px]">
      <svg viewBox="0 0 32 32" className="mr-[18px] size-8">
        <circle cx="16" cy="16" r="15.500" fill="#ff0" stroke="#000" />
        <ellipse cx="12.500" cy="11.500" rx="1.800" ry="3.500" />
        <ellipse cx="19.500" cy="11.500" rx="1.800" ry="3.500" />
        <path d="M8 26c2-8 14-8 16 0" fill="none" stroke="#000" strokeWidth="1.200" />
      </svg>
      <h2 className={`text-[15px] font-bold whitespace-pre ${MONO}`}>金字塔 遇到了问题需要关闭.对您造成的不便我们表示遗憾</h2>
    </div>
    <div className="flex flex-1 flex-col px-[18px]">
      <p className="mt-2 leading-3 whitespace-nowrap">
        <span className="pl-[18px]">系统自动创建了一份有关错误的信息，此信息不包含您的任何代码及您的私密</span><br />
        信息，仅限于帮助我们发现程序上的错误和原因。请将您出现错误时的详细操作<br />
        步骤和你的联系方式填写在下面的文字框中。感谢您对我们工作的支持。
      </p>
      <div className="mt-[18px] flex justify-between pr-[3px]">
        <label className="flex w-[182px] flex-col leading-[18px]">您的联系QQ(可选):
          <input className="mt-[5px] h-[21px] border border-black bg-white" />
        </label>
        <label className="flex w-[182px] flex-col leading-[18px]">您的联系电话(可选):
          <input className="mt-[5px] h-[21px] border border-[#7a7a7a] bg-white" />
        </label>
      </div>
      <label htmlFor="steps" className="mt-1 leading-4">详细描述您出错前的操作步骤（可选）:</label>
      <textarea id="steps" className="mt-1 mr-[3px] h-36 resize-none border border-black bg-white" />
      <div className="-ml-1 flex items-center pt-[10px] pr-[6px]">
        <span className={`flex-1 text-[11px] ${MONO}`}>报告文件位于C:\WinStock.dmp</span>
        <button className="mr-4 h-[19px] w-[88px] border border-[#adadad] bg-[#e1e1e1] leading-4">发送并退出</button>
        <button className="h-[19px] w-[74px] border-2 border-[#0078d7] bg-[#e1e1e1] p-0 leading-[13px]"><span className="block border border-dotted border-black">退出</span></button>
      </div>
    </div>
  </section>
);

const StatusBar: React.FC = () => (
  <footer className={`flex h-6 shrink-0 items-center border-t border-[#5a5c5e] bg-[#1f2326] text-[13px] text-gray-200 ${MONO}`}>
    <span className="w-[781px] pl-1">沪 <span className="text-[#38d838]">3361.5 -0.73% (-24.84)</span> 5848亿</span>
    <span>深 <span className="text-[#38d838]">10537 -0.35% (-36.49)</span> 9256亿</span>
    <div className={`ml-auto flex h-full items-center text-[12px] ${UI}`}>
      <span className="flex h-full w-[86px] items-center gap-1 border-l border-[#5a5c5e] pl-[3px]"><i className="size-[9px] rounded-full border-2 border-dotted border-[#c040c0] bg-white" />即时行情...</span>
      {[PythonIcon, Cylinder, Radar, Bell, CircleUserRound, Server, AiHead].map((Icon, i) => (
        <button key={i} className="flex h-full w-[30px] items-center justify-center border-l border-[#5a5c5e] text-gray-300"><Icon className="size-[15px]" /></button>
      ))}
      <span className="w-16 border-l border-[#5a5c5e] pl-[3px] leading-[22px]">21:15:47</span>
    </div>
  </footer>
);

const TaskBar: React.FC = () => (
  <div className={`h-6 shrink-0 overflow-hidden bg-[#1a2b20] text-white ${UI}`}>
    <div className="flex h-10 items-center">
      <span className="flex w-[46px] justify-center pr-2"><svg viewBox="0 0 16 16" className="size-4"><path d="M0 2l7-1v6H0zM8 1l8-1v7H8zM0 8h7v7l-7-1zM8 8h8v8l-8-1z" fill="#fff" /></svg></span>
      <span className="flex w-[49px] justify-center"><svg viewBox="0 0 22 20" className="h-5 w-[22px]"><path d="M0 1h8l2 2h12v17H0z" fill="#f0c050" /><path d="M4 12h14v8H4z" fill="#3a98d8" /></svg></span>
      <span className="flex w-[49px] justify-center text-[26px] text-[#30d868]"><AiFillWechat /></span>
      <span className="flex h-full w-[48px] items-center justify-center border-r-4 border-[#33443a] bg-[#48584e]"><AppLogo className="size-6" /></span>
      <span className="flex w-[52px] justify-center">
        <svg viewBox="0 0 24 24" className="size-6">
          <circle cx="12" cy="12" r="12" fill="#f4c020" />
          <path d="M12 12L1.600 6A12 12 0 0 1 22.400 6z" fill="#e04030" />
          <path d="M12 12L1.600 6A12 12 0 0 0 12 24z" fill="#30a050" />
          <circle cx="12" cy="12" r="5.500" fill="#3070e0" stroke="#fff" strokeWidth="1.500" />
        </svg>
      </span>
      <span className="flex w-[46px] justify-center"><MonitorIcon className="size-[22px]" /></span>
      <div className="ml-auto flex items-center text-[15px] font-bold">
        <span className="mr-[22px] w-4 rotate-[-8deg] rounded bg-[#f05020] text-center leading-[17px]">S</span>
        <span className="flex h-10 w-[22px] items-center justify-center bg-[#34443a]"><i className="w-4 rotate-[-8deg] rounded bg-[#f05020] text-center leading-[17px] not-italic">S</i></span>
        <span className="w-6 text-center text-[#e02020]">W</span>
        <span className="flex w-6 justify-center"><svg viewBox="0 0 16 16" className="size-4"><ellipse cx="8" cy="8" rx="5" ry="8" fill="#111" /><path d="M6 3h1v3H6zM9 3h1v3H9z" fill="#fff" /><path d="M3 8h10v3H3z" fill="#e02020" /></svg></span>
        <span className="flex w-6 justify-center"><svg viewBox="0 0 16 16" className="size-4"><path d="M3 0l3 3h4l3-3v16H3z" fill="#d8b080" /></svg></span>
        <span className="flex w-6 justify-center text-[#30d868]"><AiFillWechat /></span>
        <span className="flex w-6 justify-center"><MonitorIcon className="size-4" /></span>
        <span className="flex w-6 justify-center"><i className="h-4 w-3 border border-gray-500 bg-[#3c4440]" /></span>
        <span className="flex w-6 justify-center"><Usb className="size-4" /></span>
        <span className="flex w-6 justify-center"><svg viewBox="0 0 16 16" className="size-4"><path d="M1 2l7-2 7 2v6c0 4-4 7-7 8-3-1-7-4-7-8z" fill="#fff" /><path d="M8 0v16M1 7h14" stroke="#1a2b20" /></svg></span>
        <span className="flex w-6 justify-center"><ShieldCheck className="size-4" fill="#18a890" /></span>
        <span className="flex w-6 justify-center"><i className="h-3 w-4 border-2 border-white" /></span>
        <span className="flex w-6 justify-center"><Volume2 className="size-4" /></span>
        <span className="mr-[30px] w-6 text-center">中</span>
        <span className="mb-6 w-[90px] text-[12px] font-normal whitespace-nowrap">21:15:48 星期二</span>
        <span className="mr-[21px] ml-[47px] h-4 w-4 border border-white" />
        <span className="h-10 border-l border-gray-500 pr-[3px]" />
      </div>
    </div>
  </div>
);

export default function App() {
  return (
    <div className="relative flex h-screen flex-col overflow-hidden bg-[#23272b]">
      <TopBars />
      <main className="flex min-h-0 flex-1">
        <InfoPanel />
        <div className="w-[6px] shrink-0 bg-[#38393d]" />
        <div className="flex min-w-0 flex-1 flex-col font-['Noto_Sans_CJK_SC',sans-serif]">
          <div className="flex min-h-0 flex-1">
            <QuotePanel />
            <ChartPanel />
            <DepthPanel />
          </div>
          <div className="h-2 shrink-0 bg-[#4a4a4a]" />
          <TradePanel />
        </div>
      </main>
      <StatusBar />
      <TaskBar />
      <TaskManager />
      <CrashDialog />
    </div>
  );
}
